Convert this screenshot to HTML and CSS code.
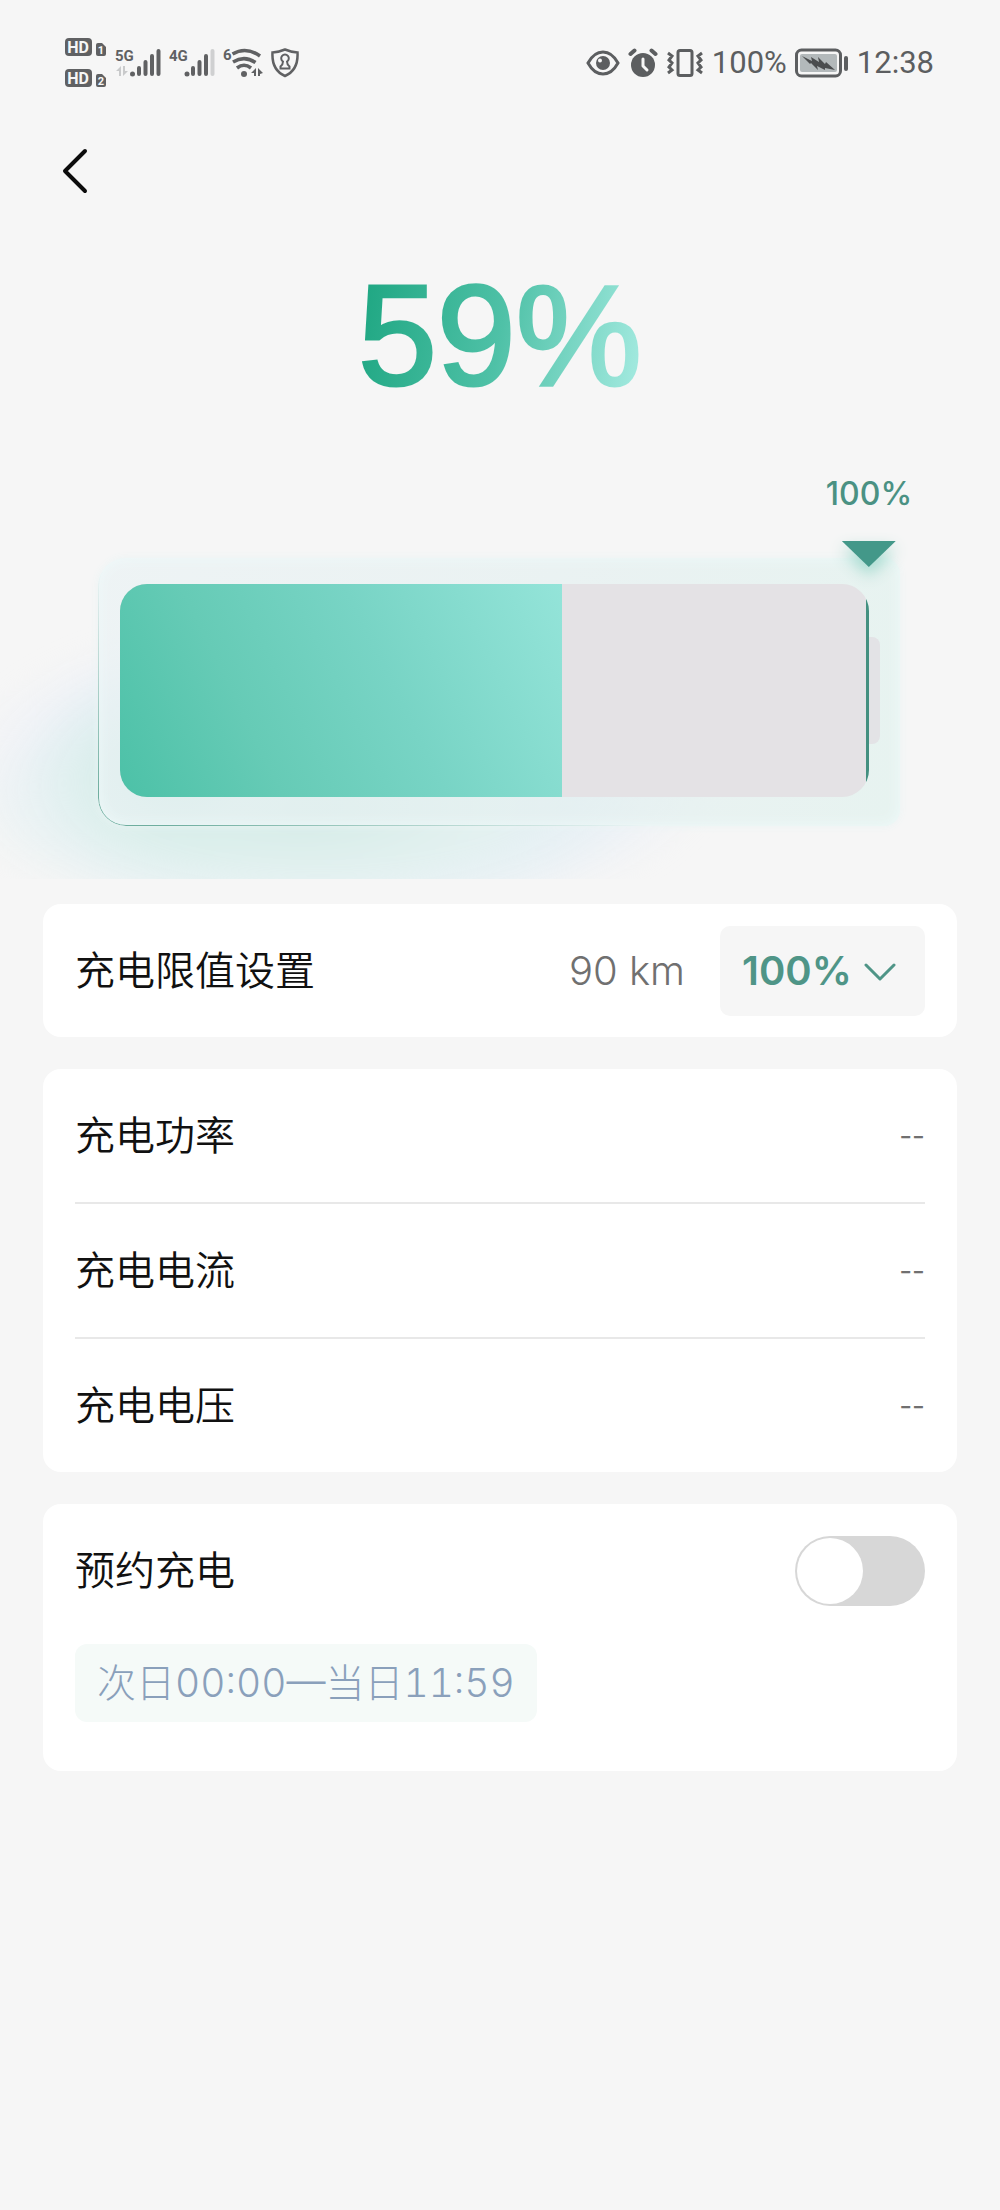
FILE: index.html
```html
<!DOCTYPE html>
<html lang="zh-CN">
<head>
<meta charset="utf-8">
<meta name="viewport" content="width=device-width, initial-scale=1">
<title>充电</title>
<link rel="stylesheet" href="styles.css">
</head>
<body>
<header class="status">
  <div class="status-group">
    <svg class="icon" width="42" height="52" viewBox="0 0 42 52" aria-hidden="true">
      <g fill="#606163">
        <rect x="0" y="1" width="27" height="18" rx="4"/>
        <rect x="0" y="32" width="27" height="18" rx="4"/>
        <path d="M31 8a2 2 0 0 1 2-2h4l4 4v7a2 2 0 0 1-2 2h-6a2 2 0 0 1-2-2z"/>
        <path d="M31 39a2 2 0 0 1 2-2h4l4 4v7a2 2 0 0 1-2 2h-6a2 2 0 0 1-2-2z"/>
      </g>
      <g class="badge-text">
        <text x="13" y="16" font-size="16">HD</text>
        <text x="13" y="47" font-size="16">HD</text>
        <text x="36" y="17" font-size="11">1</text>
        <text x="36" y="48" font-size="11">2</text>
      </g>
    </svg>
    <svg class="icon" width="46" height="32" viewBox="0 0 46 32" aria-hidden="true">
      <text class="net-text" x="0" y="14">5G</text>
      <path fill="#c9cacb" d="M1 24l5-5v10H4v-5zM8 19v10l5-5h-3v-5z"/>
      <circle cx="17.500" cy="27" r="2.500" fill="#606163"/>
      <g stroke="#606163" stroke-width="4" stroke-linecap="round"><path d="M24 21v6M30.500 15v12M37 9v18M43.500 4v23"/></g>
    </svg>
    <svg class="icon" width="46" height="32" viewBox="0 0 46 32" aria-hidden="true">
      <text class="net-text" x="0" y="14">4G</text>
      <circle cx="18" cy="27" r="2.500" fill="#606163"/>
      <g stroke="#606163" stroke-width="4" stroke-linecap="round"><path d="M24 21v6M30.500 15v12M37 9v18"/><path stroke="#cfd0d1" d="M43.500 4v23"/></g>
    </svg>
    <svg class="icon" width="40" height="32" viewBox="0 0 40 32" aria-hidden="true">
      <text class="net-text" x="0" y="13">6</text>
      <g fill="none" stroke="#606163" stroke-width="3.500"><path d="M9.500 7Q23-1 37 9M10 15Q21.500 8 32.500 15.500M14 21Q21 15.500 28 21"/></g>
      <circle cx="21" cy="27" r="3" fill="#606163"/>
      <path fill="#606163" d="M28 26l5-5v8h-2v-3zM35 21l5 5-3 1v2h-2z"/>
    </svg>
    <svg class="icon" width="28" height="30" viewBox="0 0 28 30" fill="none" stroke="#606163" aria-hidden="true">
      <path stroke-width="2.500" d="M14 1.500Q20 4 26.500 4.500Q27.500 22 14 28Q.5 22 1.500 4.500Q8 4 14 1.500z"/>
      <path stroke-width="2" d="M12 13.500a3.800 3.800 0 1 1 4 0q0 3 2.500 5v2h-9v-2q2.500-2 2.500-5z"/>
    </svg>
  </div>
  <div class="status-group">
    <svg class="icon" width="34" height="26" viewBox="0 0 34 26" aria-hidden="true">
      <path fill="none" stroke="#5c5e60" stroke-width="3" d="M2 13Q8 2 17 2t15 11Q26 24 17 24T2 13z"/>
      <circle cx="17" cy="13" r="7" fill="#5c5e60"/>
      <circle cx="14" cy="10.500" r="2" fill="#f6f6f6"/>
    </svg>
    <svg class="icon" width="30" height="30" viewBox="0 0 30 30" aria-hidden="true">
      <circle cx="15" cy="17" r="12" fill="#5c5e60"/>
      <path fill="none" stroke="#5c5e60" stroke-width="4" stroke-linecap="round" d="M2.500 6l4-3.500M27.500 6l-4-3.500"/>
      <path fill="none" stroke="#f6f6f6" stroke-width="3" stroke-linecap="round" stroke-linejoin="round" d="M15 11v7l4 4"/>
    </svg>
    <svg class="icon" width="38" height="30" viewBox="0 0 38 30" fill="none" stroke="#5c5e60" aria-hidden="true">
      <rect x="12" y="2.500" width="14" height="25" rx="2" stroke-width="3"/>
      <path stroke-width="3" d="M2 5l4 3-3 4 3 3-3 4 3 3-4 3M36 5l-4 3 3 4-3 3 3 4-3 3 4 3"/>
    </svg>
    <span class="status-text">100%</span>
    <svg class="icon" width="54" height="30" viewBox="0 0 54 30" aria-hidden="true">
      <rect x="1.500" y="2" width="44" height="26" rx="5" fill="none" stroke="#5c5e60" stroke-width="3"/>
      <rect x="5" y="6" width="37" height="18" rx="2" fill="#b3b9bb"/>
      <path fill="#4b4d4f" d="M7 8l10 5-1-4 8 5-1-5 7 7 1-2 9 8-10-2 0 2-8-4 1 4-7-7-1 1z"/>
      <rect x="49" y="8" width="4" height="15" rx="2" fill="#5c5e60"/>
    </svg>
    <span class="status-text">12:38</span>
  </div>
</header>

<nav class="nav">
  <button class="back" type="button" aria-label="返回">
    <svg class="icon" width="26" height="46" viewBox="0 0 26 46" fill="none" stroke="#0c0c0c" stroke-width="4" stroke-linecap="round" stroke-linejoin="round" aria-hidden="true"><path d="M23 3L3 23l20 20"/></svg>
  </button>
</nav>

<main>
  <h1 class="level">59%</h1>

  <section class="stage" aria-label="电量">
    <div class="glow-clip"><div class="glow"></div></div>
    <div class="housing">
      <div class="pack">
        <div class="cell">
          <div class="fill" style="width: 59%"></div>
        </div>
        <div class="terminal"></div>
        <div class="marker">
          <span>100%</span>
          <svg class="icon pointer" width="54" height="26" viewBox="0 0 54 26" aria-hidden="true"><path fill="#439889" d="M0 0h54L27 26z"/></svg>
        </div>
      </div>
    </div>
  </section>

  <div class="cards">
    <section class="card row">
      <label class="label" for="limit">充电限值设置</label>
      <span class="range">90 km</span>
      <span class="picker">
        <select id="limit" class="limit"><option>100%</option></select>
        <svg class="icon chevron" width="32" height="18" viewBox="0 0 32 18" fill="none" stroke="#4f9587" stroke-width="3" stroke-linecap="round" stroke-linejoin="round" aria-hidden="true"><path d="M2 2l14 14L30 2"/></svg>
      </span>
    </section>

    <dl class="card metrics">
      <div class="row metric"><dt class="label">充电功率</dt><dd>--</dd></div>
      <div class="row metric"><dt class="label">充电电流</dt><dd>--</dd></div>
      <div class="row metric"><dt class="label">充电电压</dt><dd>--</dd></div>
    </dl>

    <section class="card schedule">
      <div class="schedule-head">
        <label class="label" for="booking">预约充电</label>
        <input id="booking" class="toggle" type="checkbox" role="switch">
      </div>
      <button class="period" type="button">次日00:00—当日11:59</button>
    </section>
  </div>
</main>
</body>
</html>
```

FILE: styles.css
```css
* {
  box-sizing: border-box;
}

body {
  margin: 0;
  min-height: 100vh;
  background: #f6f6f6;
  color: #111;
  font-family: Inter, "Noto Sans CJK SC", sans-serif;
  font-size: 40px;
  line-height: 56px;
}

button,
select {
  border: 0;
  font: inherit;
  cursor: pointer;
}

.icon {
  display: block;
  flex: none;
}

/* Status bar */
.status {
  display: flex;
  justify-content: space-between;
  padding: 37px 66px 37px 65px;
}

.status-group {
  display: flex;
  align-items: center;
  gap: 8px;
  height: 52px;
}

.badge-text {
  fill: #f6f6f6;
  font-family: Roboto, sans-serif;
  font-weight: 700;
  text-anchor: middle;
}

.net-text {
  fill: #606163;
  font-family: Roboto, sans-serif;
  font-size: 15px;
  font-weight: 700;
}

.status-text {
  color: #5c5e60;
  font-family: Roboto, sans-serif;
  font-size: 31px;
  line-height: 40px;
}

/* Navigation */
.nav {
  padding: 0 62px;
}

.back {
  display: flex;
  align-items: center;
  height: 90px;
  padding: 0;
  background: none;
}

/* Charge level */
.level {
  width: fit-content;
  margin: 40px auto 0;
  background: linear-gradient(100deg, #21a884 5%, #4fc1a7 50%, #9fe8dd 95%);
  background-clip: text;
  -webkit-background-clip: text;
  color: transparent;
  -webkit-text-stroke: 3px transparent;
  font-family: "Liberation Sans", sans-serif;
  font-size: 142px;
  font-weight: 400;
  line-height: 160px;
}

.stage {
  position: relative;
  padding: 142px 100px 78px 98px;
}

.glow-clip {
  position: absolute;
  inset: 0 0 25px;
  overflow: hidden;
}

.glow {
  position: absolute;
  left: -4%;
  bottom: -50px;
  width: 76%;
  height: 320px;
  background:
    radial-gradient(closest-side at 28% 50%, #c6e6df, #d8eeeaa0 40%, transparent 70%),
    radial-gradient(closest-side at 45% 62%, #d3ebe6, #e3f1f0 55%, transparent),
    radial-gradient(closest-side, #e8eef8 65%, transparent);
  filter: blur(12px);
}

.housing {
  position: relative;
  padding: 26px 31px 29px 22px;
  border-radius: 28px 16px 16px 28px;
  background: linear-gradient(100deg, #eaf2f4b0, #e4f0f0b0 60%, #e2f2eec0);
  box-shadow: inset 0 0 14px #effafa, 0 0 8px #ebf4f4;
}

.housing::before {
  content: "";
  position: absolute;
  inset: 0;
  border: 1px solid #6fae9f;
  border-radius: inherit;
  mask-image: linear-gradient(25deg, #000 5%, transparent 40%);
}

.pack {
  position: relative;
}

.cell {
  position: relative;
  height: 213px;
  overflow: hidden;
  border-radius: 27px;
  background: linear-gradient(#439080, #439080) right / 3px 100% no-repeat #e4e2e5;
}

.fill {
  height: 100%;
  background: linear-gradient(64deg, #4cc1a7, #66cbb6 30%, #78d4c5 60%, #86dccf 80%, #94e4d9);
}

.terminal {
  position: absolute;
  left: 100%;
  top: 25%;
  width: 11px;
  height: 50%;
  border-radius: 0 8px 8px 0;
  background: #e3e3e6;
}

.marker {
  position: absolute;
  left: 100%;
  bottom: calc(100% + 17px);
  display: flex;
  flex-direction: column;
  align-items: center;
  gap: 27px;
  transform: translateX(-50%);
  color: #4a9183;
  font-size: 32px;
  font-weight: 500;
  line-height: 40px;
}

.pointer {
  filter: drop-shadow(0 8px 8px #9fd8cc);
}

/* Cards */
.cards {
  display: flex;
  flex-direction: column;
  gap: 32px;
  padding: 0 43px;
}

.card {
  margin: 0;
  padding: 0 32px;
  border-radius: 18px;
  background: #fff;
}

.row {
  display: flex;
  align-items: center;
  min-height: 133px;
}

.label {
  flex: 1;
  font-weight: 350;
}

.range {
  color: #707070;
  font-weight: 300;
}

.picker {
  position: relative;
  margin-left: 35px;
}

.limit {
  display: block;
  width: 205px;
  height: 90px;
  padding: 0 70px 0 22px;
  border-radius: 10px;
  appearance: none;
  background: #f6f6f6;
  color: #4f9587;
  font-weight: 600;
}

.chevron {
  position: absolute;
  right: 29px;
  top: 37px;
  pointer-events: none;
}

.metric + .metric {
  border-top: 2px solid #e8e8e8;
  min-height: 135px;
}

.metric dd {
  margin: 0;
  color: #707070;
  font-size: 28px;
}

.schedule {
  padding: 32px 32px 49px;
}

.schedule-head {
  display: flex;
  align-items: center;
  margin-bottom: 38px;
}

.toggle {
  display: flex;
  width: 130px;
  height: 70px;
  margin: 0;
  padding: 2px;
  border-radius: 35px;
  appearance: none;
  background: #d7d7d7;
  cursor: pointer;
}

.toggle::before {
  content: "";
  width: 66px;
  height: 66px;
  border-radius: 50%;
  background: #fff;
}

.toggle:checked {
  justify-content: flex-end;
  background: #4cc1a7;
}

.period {
  display: block;
  height: 78px;
  padding: 0 22px;
  border-radius: 12px;
  background: #f5faf8;
  color: #8aa0bb;
  font-size: 39px;
  font-weight: 300;
  font-variant-numeric: tabular-nums;
}
```
